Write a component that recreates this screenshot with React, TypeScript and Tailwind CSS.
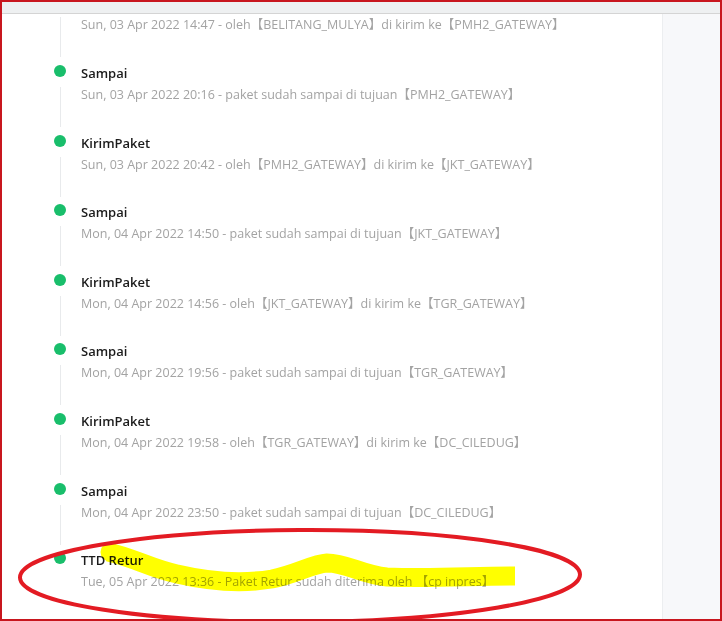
import React from 'react';

type Step = { title: string; desc: string };

const steps: Step[] = [
    { title: 'KirimPaket', desc: 'Sun, 03 Apr 2022 14:47 - oleh【BELITANG_MULYA】di kirim ke【PMH2_GATEWAY】' },
    { title: 'Sampai', desc: 'Sun, 03 Apr 2022 20:16 - paket sudah sampai di tujuan【PMH2_GATEWAY】' },
    { title: 'KirimPaket', desc: 'Sun, 03 Apr 2022 20:42 - oleh【PMH2_GATEWAY】di kirim ke【JKT_GATEWAY】' },
    { title: 'Sampai', desc: 'Mon, 04 Apr 2022 14:50 - paket sudah sampai di tujuan【JKT_GATEWAY】' },
    { title: 'KirimPaket', desc: 'Mon, 04 Apr 2022 14:56 - oleh【JKT_GATEWAY】di kirim ke【TGR_GATEWAY】' },
    { title: 'Sampai', desc: 'Mon, 04 Apr 2022 19:56 - paket sudah sampai di tujuan【TGR_GATEWAY】' },
    { title: 'KirimPaket', desc: 'Mon, 04 Apr 2022 19:58 - oleh【TGR_GATEWAY】di kirim ke【DC_CILEDUG】' },
    { title: 'Sampai', desc: 'Mon, 04 Apr 2022 23:50 - paket sudah sampai di tujuan【DC_CILEDUG】' },
    { title: 'TTD Retur', desc: 'Tue, 05 Apr 2022 13:36 - Paket Retur sudah diterima oleh 【cp inpres】' },
];

const font = { fontFamily: '"Open Sans", "Noto Sans CJK SC", sans-serif' };

const TimelineItem = ({ step, first, last }: { step: Step; first: boolean; last: boolean }) => (
    <div className="relative h-[69.6px] pl-[79px]">
        <span className="absolute left-[52px] top-[2px] w-3 h-3 rounded-full bg-[#19be6b]" />
        {!last && <span className="absolute left-[58px] top-[24px] h-[40px] w-px bg-[#e8eaec]" />}
        <div className={`text-[13px] leading-5 font-semibold text-[#1b1b1b] ${first ? 'invisible' : ''}`}>{step.title}</div>
        <div className="mt-[2px] text-[12.5px] leading-5 text-[#a3a3a3] whitespace-nowrap">{step.desc}</div>
    </div>
);

const App = () => {
    return (
        <div className="relative w-[722px] h-[621px] overflow-hidden bg-white border-2 border-[#c8161e]" style={font}>
            <div className="flex flex-col h-full">
                <div className="h-[12px] bg-[#eef0f1] border-b border-[#d4d4d4]" />
                <div className="flex flex-1 min-h-0">
                    <div className="w-[660px] overflow-hidden bg-white">
                        <div className="-mt-[20.6px]">
                            {steps.map((s, i) => (
                                <TimelineItem key={i} step={s} first={i === 0} last={i === steps.length - 1} />
                            ))}
                        </div>
                    </div>
                    <div className="flex-1 bg-[#f7f8fa] border-l border-[#eceef0]" />
                </div>
            </div>

            {/* hand-drawn annotation on top */}
            <svg className="absolute inset-0 pointer-events-none" width="722" height="621" viewBox="0 0 722 621">
                <path
                    d="M106 550 C130 555 150 567 175 572 C205 579 240 582 270 577 C295 572 310 562 325 561 C345 561 360 573 385 575 C430 577 470 574 513 574"
                    fill="none"
                    stroke="#ffff00"
                    strokeWidth="19"
                    strokeLinecap="butt"
                    style={{ mixBlendMode: 'multiply' }}
                />
                <circle cx="108" cy="550" r="9.5" fill="#ffff00" style={{ mixBlendMode: 'multiply' }} />
                <ellipse cx="298" cy="574" rx="280" ry="46" fill="none" stroke="#e31b23" strokeWidth="4" transform="rotate(-0.3 298 574)" />
            </svg>
        </div>
    );
};

export default App;
